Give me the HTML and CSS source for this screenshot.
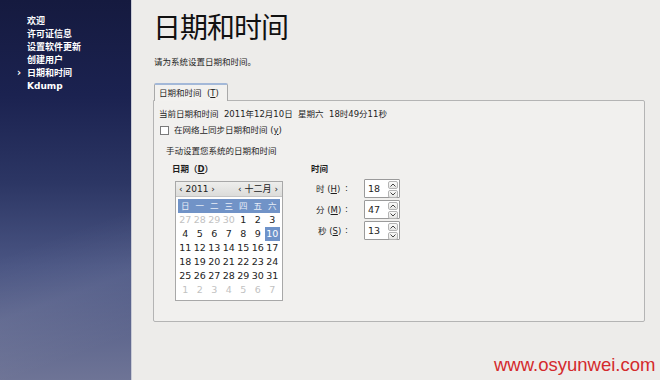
FILE: index.html
```html
<!DOCTYPE html>
<html lang="zh-CN">
<head>
  <meta charset="UTF-8" />
  <title>日期和时间</title>
  <link rel="stylesheet" href="styles.css">
</head>
<body>
  <div class="sidebar">
    <ul class="steps">
      <li>欢迎</li>
      <li>许可证信息</li>
      <li>设置软件更新</li>
      <li>创建用户</li>
      <li class="current">日期和时间</li>
      <li>Kdump</li>
    </ul>
  </div>

  <div class="main">
    <h1>日期和时间</h1>
    <div class="intro">请为系统设置日期和时间。</div>

    <div class="tabs">
      <div class="tab">日期和时间&nbsp; (<u>T</u>)</div>
    </div>
    <div class="panel">
      <div class="now">当前日期和时间&nbsp; 2011年12月10日&nbsp; 星期六&nbsp; 18时49分11秒</div>
      <label class="sync"><span class="check"></span>在网络上同步日期和时间 (<u>y</u>)</label>

      <div class="manual">
        <div class="manual-title">手动设置您系统的日期和时间</div>
        <div class="manual-body">
          <div class="date-col">
            <div class="col-title">日期（<u>D</u>）</div>
            <div class="calendar">
              <div class="cal-head">
                <span>‹ 2011 ›</span>
                <span>‹ 十二月 ›</span>
              </div>
              <div class="cal-grid" id="grid"></div>
            </div>
          </div>

          <div class="time-col">
            <div class="col-title">时间</div>
            <div class="time-row">
              <span class="time-label">时 (<u>H</u>)</span><span class="colon">:</span>
              <div class="spin"><span class="spin-val">18</span><span class="spin-btns"></span></div>
            </div>
            <div class="time-row">
              <span class="time-label">分 (<u>M</u>)</span><span class="colon">:</span>
              <div class="spin"><span class="spin-val">47</span><span class="spin-btns"></span></div>
            </div>
            <div class="time-row">
              <span class="time-label indent">秒 (<u>S</u>)</span><span class="colon">:</span>
              <div class="spin"><span class="spin-val">13</span><span class="spin-btns"></span></div>
            </div>
          </div>
        </div>
      </div>
    </div>

    <div class="watermark">www.osyunwei.com</div>
  </div>

  <script>
    const weekdays = ["日", "一", "二", "三", "四", "五", "六"];
    const days = [
      [27, 0], [28, 0], [29, 0], [30, 0], [1, 1], [2, 1], [3, 1],
      [4, 1], [5, 1], [6, 1], [7, 1], [8, 1], [9, 1], [10, 2],
      [11, 1], [12, 1], [13, 1], [14, 1], [15, 1], [16, 1], [17, 1],
      [18, 1], [19, 1], [20, 1], [21, 1], [22, 1], [23, 1], [24, 1],
      [25, 1], [26, 1], [27, 1], [28, 1], [29, 1], [30, 1], [31, 1],
      [1, 0], [2, 0], [3, 0], [4, 0], [5, 0], [6, 0], [7, 0]
    ];

    const grid = document.getElementById("grid");
    let html = "";
    weekdays.forEach(w => { html += `<span class="wd">${w}</span>`; });
    days.forEach(([n, kind]) => {
      const cls = kind === 0 ? "day other" : kind === 2 ? "day selected" : "day";
      html += `<span class="${cls}">${n}</span>`;
    });
    grid.innerHTML = html;

    // up / down arrows of the spin buttons
    const arrows = `
      <span class="arrow"><svg width="8" height="6" viewBox="0 0 8 6"><polyline points="1.5,4.5 4,2 6.5,4.5" fill="none" stroke="#444" stroke-width="1"/></svg></span>
      <span class="arrow"><svg width="8" height="6" viewBox="0 0 8 6"><polyline points="1.5,1.5 4,4 6.5,1.5" fill="none" stroke="#444" stroke-width="1"/></svg></span>`;
    document.querySelectorAll(".spin-btns").forEach(el => { el.innerHTML = arrows; });
  </script>
</body>
</html>
```

FILE: styles.css
```css
html, body {
  margin: 0;
  padding: 0;
  height: 100%;
}

body {
  display: flex;
  width: 660px;
  height: 380px;
  overflow: hidden;
  font-family: "DejaVu Sans", "Noto Sans CJK SC", sans-serif;
  font-size: 8.5px;
  color: #1e1e1e;
  background-color: #edecea;
}

u {
  text-decoration: underline;
  text-underline-offset: 1px;
}

/* left step list */
.sidebar {
  width: 131px;
  flex-shrink: 0;
  background: linear-gradient(160deg, rgba(255,255,255,0) 60%, rgba(255,255,255,0.06) 75%, rgba(255,255,255,0) 90%),
              linear-gradient(to bottom, #151a3f 0%, #1b2250 25%, #2c3664 48%, #4a5583 70%, #6e7496 100%);
  border-right: 1px solid #c9cbd6;
}

.steps {
  list-style: none;
  margin: 0;
  padding: 15px 0 0 27px;
}

.steps li {
  position: relative;
  color: #ffffff;
  font-weight: bold;
  font-size: 9px;
  line-height: 13px;
  height: 13px;
}

.steps li.current::before {
  content: "›";
  position: absolute;
  left: -10px;
  top: -1px;
  font-size: 10px;
}

/* main area */
.main {
  flex: 1;
  padding-left: 21px;
  position: relative;
}

h1 {
  font-family: "Noto Sans CJK SC", sans-serif;
  font-size: 28px;
  font-weight: normal;
  line-height: 30px;
  letter-spacing: -1px;
  margin: 11px 0 0 0;
  color: #111;
}

.intro {
  margin: 15px 0 0 1px;
  line-height: 12px;
}

.tabs {
  display: flex;
  margin: 15px 0 0 1px;
}

.tab {
  position: relative;
  z-index: 1;
  padding: 2px 8px 2px 4px;
  line-height: 12px;
  background-color: #f2f1ef;
  border: 1px solid #a9a9a9;
  border-top: 2px solid #a3b8d8;
  border-bottom: none;
  border-radius: 2px 2px 0 0;
  margin-bottom: -1px;
}

.panel {
  width: 490px;
  height: 220px;
  background-color: #f1f0ee;
  border: 1px solid #b4b4b4;
  border-radius: 0 2px 2px 2px;
}

.now {
  margin: 7px 0 0 5px;
  line-height: 12px;
  white-space: nowrap;
}

.sync {
  display: flex;
  align-items: center;
  margin: 4px 0 0 6px;
  line-height: 12px;
}

.check {
  width: 7px;
  height: 7px;
  border: 1px solid #7a7a7a;
  background: #fff;
  margin-right: 5px;
}

.manual {
  margin: 9px 0 0 12px;
}

.manual-title {
  line-height: 12px;
}

.manual-body {
  display: flex;
  margin-top: 6px;
}

.col-title {
  font-weight: bold;
  line-height: 12px;
}

.date-col {
  width: 139px;
  padding-left: 6px;
}

.calendar {
  margin: 6px 0 0 3px;
  width: 106px;
  height: 118px;
  border: 1px solid #a8a8a8;
  background: #ffffff;
}

.cal-head {
  display: flex;
  justify-content: space-between;
  height: 14px;
  line-height: 14px;
  padding: 0 4px 0 3px;
  background: linear-gradient(to bottom, #eeeeec, #dcdcda);
  border-bottom: 1px solid #c4c4c4;
  color: #222;
  font-size: 9px;
}

.cal-grid {
  display: grid;
  grid-template-columns: repeat(7, 14.5px);
  grid-auto-rows: 14px;
  margin: 2px 0 0 2px;
  width: 101.5px;
}

.cal-grid span {
  text-align: center;
  line-height: 14px;
  font-size: 9.5px;
}

.cal-grid .wd {
  background-color: #7193c7;
  color: #e8eef8;
  font-size: 8.5px;
}

.day {
  color: #222;
}

.day.other {
  color: #c2c2c2;
}

.day.selected {
  background-color: #6f93c9;
  color: #ffffff;
}

/* time column */
.time-row {
  display: flex;
  align-items: center;
  height: 18px;
  margin: 0 0 3px 5px;
  white-space: nowrap;
}

.col-title + .time-row {
  margin-top: 4px;
}

.time-label {
  width: 29px;
}

.time-label.indent {
  padding-left: 2px;
  width: 27px;
}

.colon {
  width: 19px;
}

.spin {
  display: flex;
  width: 34px;
  height: 17px;
  border: 1px solid #9a9a9a;
  background: #ffffff;
  border-radius: 1px;
}

.spin-val {
  flex: 1;
  line-height: 17px;
  padding-left: 3px;
  font-size: 9.5px;
}

.spin-btns {
  display: flex;
  flex-direction: column;
  gap: 1px;
  width: 10px;
  padding: 1px 1px 1px 0;
}

.arrow {
  flex: 1;
  display: flex;
  align-items: center;
  justify-content: center;
  border: 1px solid #b4b4b4;
  border-radius: 2px;
  background: linear-gradient(to bottom, #fafaf9, #e6e6e4);
}

.watermark {
  position: absolute;
  left: 362px;
  top: 354px;
  font-family: "Liberation Sans", Arial, sans-serif;
  font-size: 18.5px;
  color: #d42a2c;
}
```
